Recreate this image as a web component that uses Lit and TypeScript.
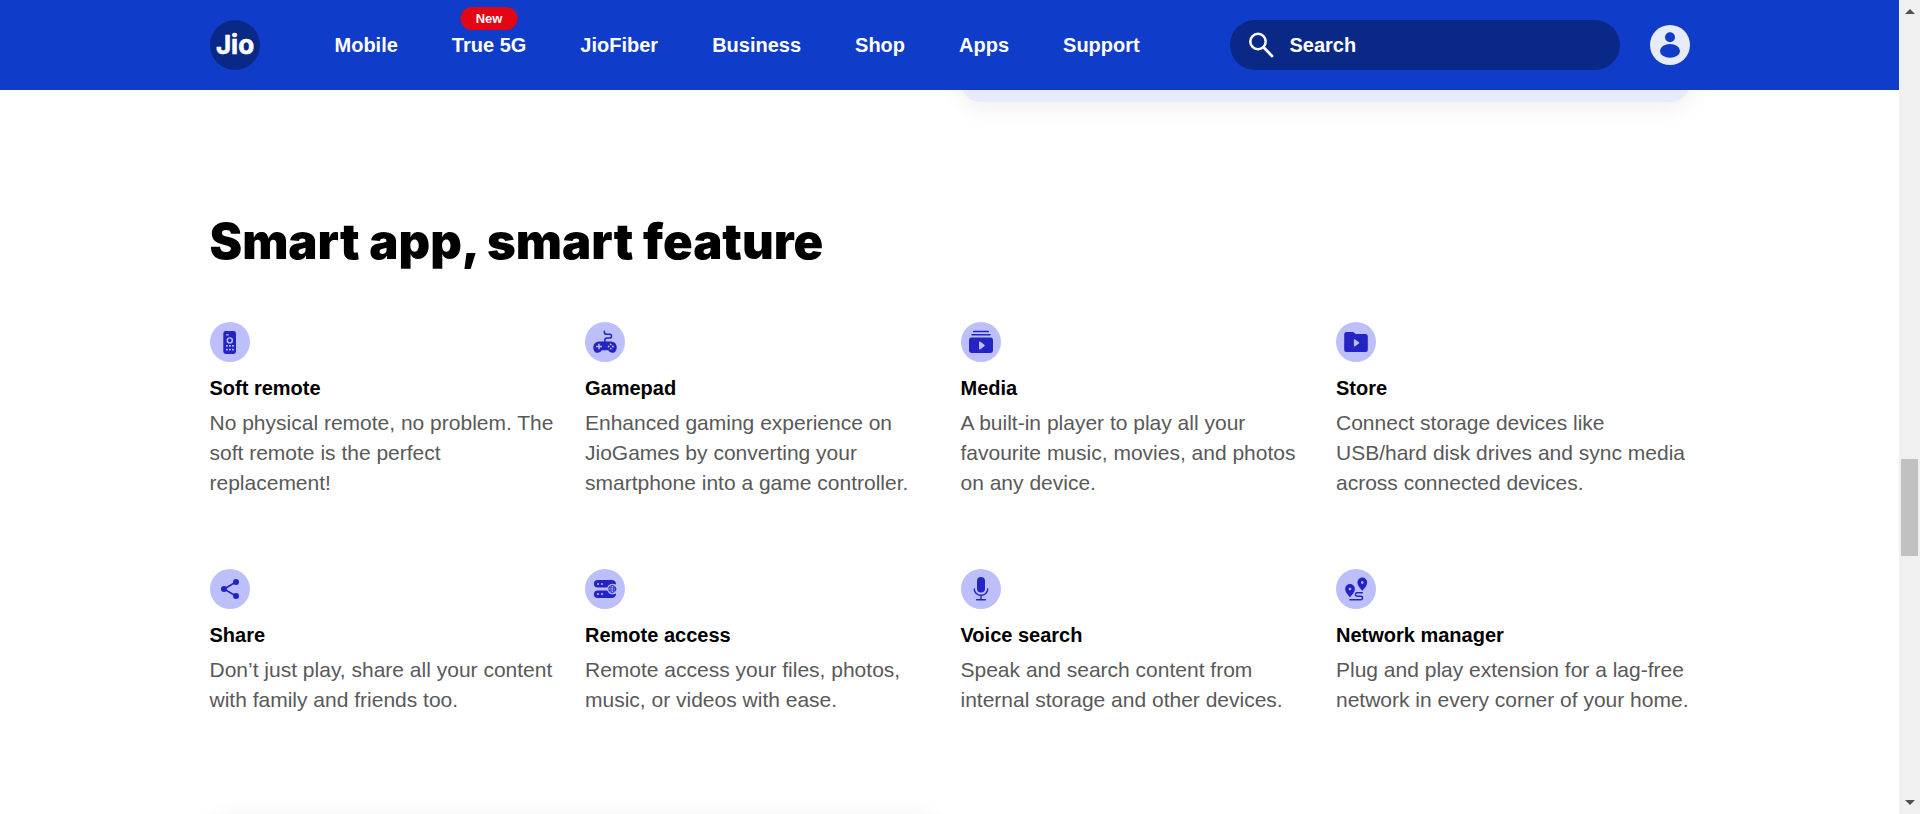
import { LitElement, html, css, svg, TemplateResult } from "lit";
import { customElement, property } from "lit/decorators.js";

interface Feature {
  icon: string;
  title: string;
  text: string;
}

const NAV: { label: string; badge?: string }[] = [
  { label: "Mobile" },
  { label: "True 5G", badge: "New" },
  { label: "JioFiber" },
  { label: "Business" },
  { label: "Shop" },
  { label: "Apps" },
  { label: "Support" },
];

const FEATURES: Feature[] = [
  { icon: "remote", title: "Soft remote", text: "No physical remote, no problem. The soft remote is the perfect replacement!" },
  { icon: "gamepad", title: "Gamepad", text: "Enhanced gaming experience on JioGames by converting your smartphone into a game controller." },
  { icon: "media", title: "Media", text: "A built-in player to play all your favourite music, movies, and photos on any device." },
  { icon: "store", title: "Store", text: "Connect storage devices like USB/hard disk drives and sync media across connected devices." },
  { icon: "share", title: "Share", text: "Don’t just play, share all your content with family and friends too." },
  { icon: "access", title: "Remote access", text: "Remote access your files, photos, music, or videos with ease." },
  { icon: "voice", title: "Voice search", text: "Speak and search content from internal storage and other devices." },
  { icon: "network", title: "Network manager", text: "Plug and play extension for a lag-free network in every corner of your home." },
];

const GLYPHS: Record<string, TemplateResult> = {
  remote: svg`
    <rect class="ink" x="13.3" y="9" width="12.7" height="23" rx="2.4"></rect>
    <rect class="paper" x="16" y="12.2" width="2.8" height="1.4" rx=".7"></rect>
    <circle class="paper-line" cx="19.8" cy="18.4" r="2.5" stroke-width="1.4"></circle>
    <g class="paper">
      <rect x="16" y="23" width="1.8" height="1.6"></rect><rect x="19" y="23" width="1.8" height="1.6"></rect><rect x="22" y="23" width="1.8" height="1.6"></rect>
      <rect x="16" y="26.8" width="1.8" height="1.6"></rect><rect x="19" y="26.8" width="1.8" height="1.6"></rect><rect x="22" y="26.8" width="1.8" height="1.6"></rect>
    </g>`,
  gamepad: svg`
    <path class="line" stroke-width="1.5" d="M19.4 9.3v.9c0 1.6 1 2.1 2.6 2.1h2.6a1.9 1.9 0 0 1 0 3.8H22c-1.4 0-2.2.7-2.2 2.4v1"></path>
    <path class="ink" d="M14 19.5h12a5.6 5.600 0 0 1 5.700 5.500c0 3.500-1.600 5.800-4.100 5.800-2.400 0-3.400-1.400-4.400-2.600h-6.400c-1 1.200-2 2.600-4.400 2.600-2.500 0-4.100-2.300-4.100-5.800A5.600 5.600 0 0 1 14 19.500z"></path>
    <path class="paper-line" stroke-width="1.4" d="M11.700 24.500h4.600M14 22.200v4.600"></path>
    <g class="paper"><circle cx="25.700" cy="22.400" r=".9"></circle><circle cx="25.700" cy="26.600" r=".9"></circle><circle cx="23.600" cy="24.500" r=".9"></circle><circle cx="27.800" cy="24.500" r=".9"></circle></g>`,
  media: svg`
    <path class="line" stroke-width="1.500" d="M12.700 9.400h14.600M11 12.800h18"></path>
    <rect class="ink" x="8" y="15.500" width="24" height="15.500" rx="2.400"></rect>
    <path class="paper" d="M18 20.200c0-.7.700-1 1.200-.6l4.100 3.200c.5.400.5 1 0 1.400l-4.100 3.200c-.5.400-1.200.1-1.200-.6z"></path>`,
  store: svg`
    <path class="ink" d="M10.500 10h6.200c.7 0 1.200.3 1.600.8l1.200 1.200h10c1.300 0 2.300 1 2.300 2.300v13.400c0 1.300-1 2.300-2.300 2.300h-19c-1.300 0-2.300-1-2.300-2.300V12.300c0-1.300 1-2.300 2.300-2.300z"></path>
    <path class="paper" d="M17.900 18.100c0-.7.600-1 1.200-.6l3.800 2.700c.5.400.5.900 0 1.300l-3.800 2.700c-.600.400-1.200.1-1.200-.600z"></path>`,
  share: svg`
    <path class="line" stroke-width="1.500" d="M26 13L14 20l12 7"></path>
    <circle class="ink" cx="26" cy="13" r="3"></circle><circle class="ink" cx="14" cy="20" r="3"></circle><circle class="ink" cx="26" cy="27" r="3"></circle>`,
  access: svg`
    <path class="ink" d="M12.700 11H27c2 0 3.600 1.300 4 3.500V18.600H12.700a3.800 3.800 0 0 1 0-7.600z"></path>
    <path class="ink" d="M12.700 21.400H31V25.500c-.4 2.200-2 3.500-4 3.500H12.700a3.800 3.800 0 0 1 0-7.600z"></path>
    <g class="paper"><circle cx="13" cy="14.900" r="1"></circle><circle cx="17" cy="14.900" r="1"></circle><circle cx="13" cy="25.100" r="1"></circle><circle cx="17" cy="25.100" r="1"></circle>
    <circle cx="27.300" cy="20" r="5.200"></circle><rect x="29" y="15.400" width="3" height="9.200"></rect></g>
    <g class="line" stroke-width=".8"><circle cx="27.300" cy="20" r="3.600"></circle><ellipse cx="27.300" cy="20" rx="1.600" ry="3.600"></ellipse><path d="M24 18.800h6.600M24 21.200h6.600"></path></g>`,
  voice: svg`
    <rect class="ink" x="16" y="8" width="8" height="15.600" rx="4"></rect>
    <path class="line" stroke-width="1.400" d="M13.300 20v.2a6.700 6 0 0 0 13.400 0V20M20 26.400v4.200M15.600 30.700h8.800"></path>`,
  network: svg`
    <path class="ink" fill-rule="evenodd" d="M14 15a4.900 4.900 0 0 1 4.900 4.900c0 3.200-3 5.900-4.900 8.300-1.900-2.400-4.900-5.100-4.900-8.300A4.900 4.900 0 0 1 14 15zm0 3.700a1.300 1.300 0 1 0 0 2.600 1.300 1.300 0 0 0 0-2.600z"></path>
    <path class="ink" fill-rule="evenodd" d="M26.300 8.600a4.900 4.900 0 0 1 4.900 4.900c0 3.200-3 5.900-4.900 8.300-1.900-2.400-4.900-5.100-4.900-8.300a4.900 4.900 0 0 1 4.900-4.900zm0 3.700a1.300 1.300 0 1 0 0 2.600 1.300 1.300 0 0 0 0-2.600z"></path>
    <path class="line" stroke-width="1.500" d="M26.300 23.800h-5.200a1.700 1.700 0 0 0 0 3.400h3.700a1.700 1.700 0 0 1 0 3.500H14"></path>`,
};

@customElement("feature-item")
class FeatureItem extends LitElement {
  @property({ attribute: false }) feature!: Feature;

  static styles = css`
    :host { display: block; }
    .icon { display: block; width: 40px; height: 40px; margin-bottom: 13px; }
    .disc, .paper { fill: #bcbffa; }
    .ink { fill: #2424c4; }
    .line { fill: none; stroke: #2424c4; stroke-linecap: round; stroke-linejoin: round; }
    .paper-line { fill: none; stroke: #bcbffa; stroke-linecap: round; }
    .title { margin: 0 0 7px; font-size: 20px; line-height: 26px; font-weight: 700; color: #000; }
    .text { margin: 0; font-size: 21px; line-height: 30px; color: #595959; }
  `;

  render() {
    return html`
      <svg class="icon" viewBox="0 0 40 40" aria-hidden="true">
        <circle class="disc" cx="20" cy="20" r="20"></circle>
        ${GLYPHS[this.feature.icon]}
      </svg>
      <h3 class="title">${this.feature.title}</h3>
      <p class="text">${this.feature.text}</p>
    `;
  }
}

@customElement("site-header")
class SiteHeader extends LitElement {
  static styles = css`
    :host { display: block; position: relative; z-index: 1; background: #0f3cc9; color: #fff; }
    .bar { display: flex; align-items: center; max-width: 1480px; height: 90px; margin: 0 auto; }
    .logo { display: block; flex: none; width: 50px; height: 50px; }
    .logo svg { display: block; }
    .mark { font-family: Inter, sans-serif; font-size: 26px; font-weight: 700; fill: #fff; stroke: #fff; stroke-width: 0.6; stroke-linejoin: round; }
    .nav { display: flex; gap: 54px; margin-left: 75px; }
    .link { position: relative; color: inherit; text-decoration: none; font-size: 20px; line-height: 30px; font-weight: 700; white-space: nowrap; }
    .badge { position: absolute; left: 50%; bottom: 100%; transform: translateX(-50%); padding: 0 15px; border-radius: 12px; background: #e30513; font-size: 13px; line-height: 23px; }
    .search { display: flex; align-items: center; gap: 16px; flex: 0 1 390px; box-sizing: border-box; height: 50px; margin-left: auto; padding: 0 19px; border-radius: 25px; background: #0a2885; }
    .search svg { flex: none; }
    .field { flex: 1; min-width: 0; padding: 0; border: 0; outline: 0; background: none; color: #fff; font: inherit; font-size: 20px; font-weight: 700; line-height: 30px; }
    .field::placeholder { color: #fff; opacity: 1; }
    .user { flex: none; width: 40px; height: 40px; margin-left: 30px; padding: 0; border: 0; border-radius: 50%; background: #e7ebf8; cursor: pointer; }
    .user svg { display: block; }
  `;

  render() {
    return html`
      <header class="bar">
        <a class="logo" href="#" aria-label="Jio home">
          <svg width="50" height="50" viewBox="0 0 50 50">
            <circle cx="25" cy="25" r="25" fill="#0a2885"></circle>
            <text class="mark" x="25" y="34" text-anchor="middle">Jio</text>
          </svg>
        </a>
        <nav class="nav">
          ${NAV.map((n) => html`<a class="link" href="#">${n.label}${n.badge ? html`<span class="badge">${n.badge}</span>` : ""}</a>`)}
        </nav>
        <label class="search">
          <svg width="25" height="26" viewBox="0 0 25 26" fill="none" stroke="#fff" stroke-linecap="round" aria-hidden="true">
            <circle cx="9" cy="9.500" r="7.700" stroke-width="2.500"></circle>
            <path d="M14.800 15.500L23 24" stroke-width="2.800"></path>
          </svg>
          <input class="field" type="search" placeholder="Search" aria-label="Search" />
        </label>
        <button class="user" aria-label="Account">
          <svg width="40" height="40" viewBox="0 0 40 40" fill="#0f3cc9" aria-hidden="true">
            <circle cx="20" cy="12.300" r="5"></circle>
            <ellipse cx="20" cy="25.900" rx="10" ry="6.900"></ellipse>
          </svg>
        </button>
      </header>
    `;
  }
}

@customElement("app-root")
class AppRoot extends LitElement {
  static styles = css`
    :host { display: flex; height: 100vh; overflow: hidden; background: #fff; font-family: "Liberation Sans", Arial, sans-serif; }
    .page { flex: 1; min-width: 0; overflow: hidden; }
    .content { max-width: 1480px; margin: 0 auto; }
    .pair { display: grid; grid-template-columns: 1fr 1fr; gap: 22px; }
    .card { height: 40px; border-radius: 20px; box-shadow: 0 4px 24px rgba(0, 0, 0, 0.08); }
    .card-above { grid-column: 2; margin-top: -28px; background: #e9e9ff; }
    .card-below { height: 400px; background: #fff; }
    .heading { margin: 109px 0 49px; font-family: Inter, sans-serif; font-size: 49px; line-height: 62px; font-weight: 900; color: #000; }
    .grid { display: grid; grid-template-columns: repeat(4, 1fr); gap: 71px 22px; margin-bottom: 100px; }
    .rail { display: grid; flex: none; grid-template-rows: 23px 436fr 97fr 235fr 23px; box-sizing: border-box; width: 21px; padding: 0 2px; background: #f0f0f0; }
    .thumb { grid-row: 3; background: #c1c1c1; }
    .arrow { align-self: center; justify-self: center; display: block; }
    .arrow-down { grid-row: 5; }
  `;

  render() {
    return html`
      <div class="page">
        <site-header></site-header>
        <main class="content">
          <div class="pair"><div class="card card-above"></div></div>
          <h2 class="heading">Smart app, smart feature</h2>
          <section class="grid">
            ${FEATURES.map((f) => html`<feature-item .feature=${f}></feature-item>`)}
          </section>
          <div class="pair"><div class="card card-below"></div></div>
        </main>
      </div>
      <div class="rail" aria-hidden="true">
        <svg class="arrow" width="10" height="5" viewBox="0 0 10 5"><path d="M0 5L5 0l5 5z" fill="#505050"></path></svg>
        <div class="thumb"></div>
        <svg class="arrow arrow-down" width="10" height="5" viewBox="0 0 10 5"><path d="M0 0l5 5 5-5z" fill="#505050"></path></svg>
      </div>
    `;
  }
}
